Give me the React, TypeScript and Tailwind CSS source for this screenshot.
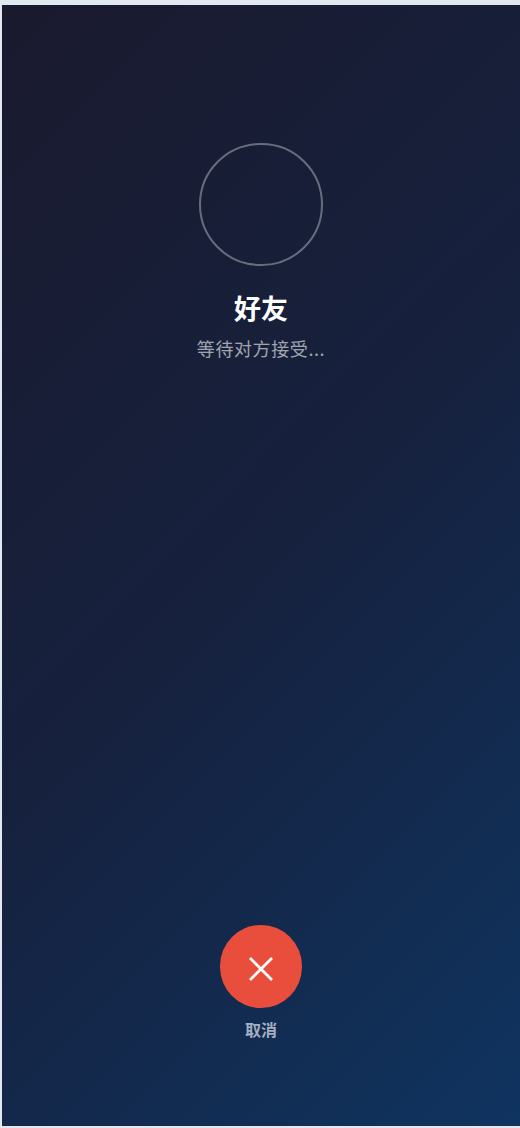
export default function App() {
  return (
    <div className="h-[1128px] w-[520px] bg-[#e2e8f0] pt-[5px] pb-[2px] pl-[2px]">
      <div
        className="flex h-full flex-col items-center justify-between bg-[linear-gradient(135deg,#1a1a2e_0%,#16213e_50%,#0f3460_100%)] pt-[138px] pb-[86px] text-center"
        style={{ fontFamily: '"Noto Sans CJK SC", "Noto Sans", sans-serif' }}
      >
        <div className="flex flex-col items-center">
          <div className="h-[123px] w-[124px] rounded-full border-2 border-white/35" />
          <h2 className="mt-[23px] text-[27px] leading-[38px] font-bold text-white">好友</h2>
          <p className="mt-[8px] text-[18px] leading-[26px] tracking-[0.6px] text-white/60">等待对方接受...</p>
        </div>
        <div className="flex flex-col items-center">
          <button className="flex h-[83px] w-[82px] items-center justify-center rounded-full bg-[#e94e3c] pt-[5px]">
            <svg width="28" height="28" viewBox="0 0 28 28" fill="none" stroke="white" strokeWidth="2.8">
              <path d="M3 3L25 25M25 3L3 25" />
            </svg>
          </button>
          <span className="mt-[10px] text-[16px] leading-[22px] font-semibold text-[#a3afc2]">取消</span>
        </div>
      </div>
    </div>
  );
}
